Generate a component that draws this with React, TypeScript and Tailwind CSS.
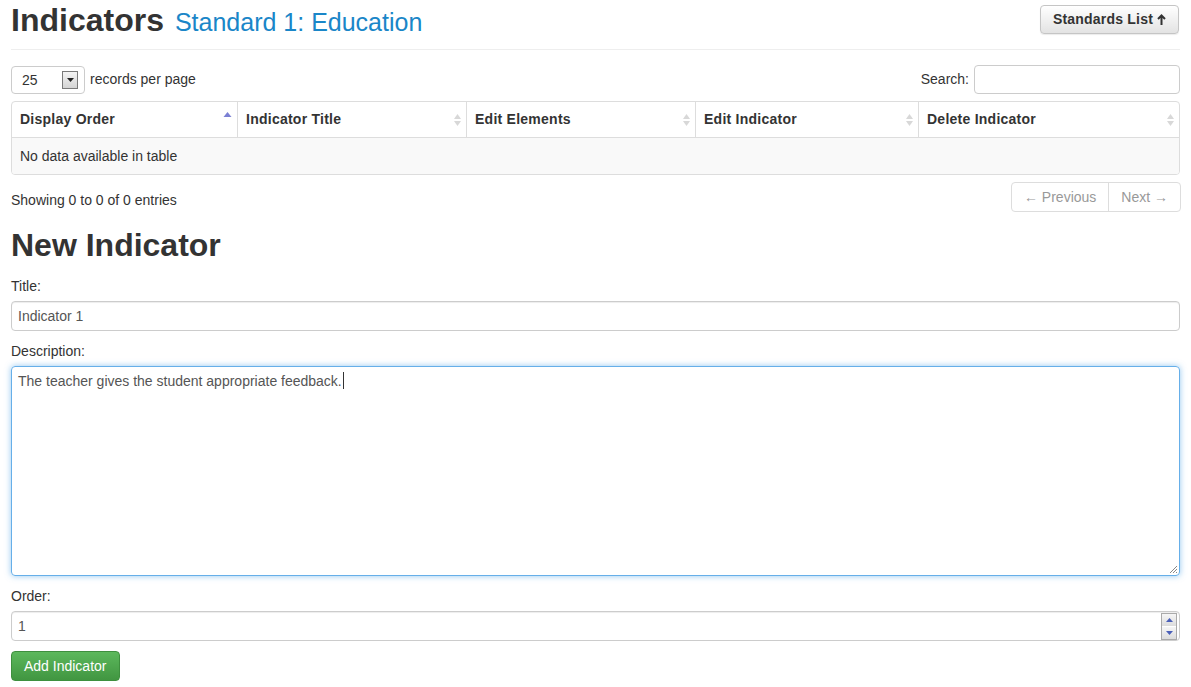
const columns = [
  { title: "Display Order", width: "w-[225px]", active: true },
  { title: "Indicator Title", width: "w-[229px]" },
  { title: "Edit Elements", width: "w-[229px]" },
  { title: "Edit Indicator", width: "w-[223px]" },
  { title: "Delete Indicator", width: "flex-1" },
];

function SortIcon({ active }: { active?: boolean }) {
  if (active) {
    return (
      <svg width="9" height="12" viewBox="0 0 9 12" aria-hidden="true">
        <path d="M4.5 1 L8.5 6 H0.5 Z" fill="#7b80d4" />
      </svg>
    );
  }
  return (
    <svg width="9" height="14" viewBox="0 0 9 14" aria-hidden="true">
      <path d="M4.5 1 L8 6 H1 Z" fill="#d8d8d8" />
      <path d="M4.5 13 L8 8 H1 Z" fill="#d8d8d8" />
    </svg>
  );
}

export default function App() {
  return (
    <div className="min-h-[687px] bg-white px-[11px] pt-[2px] font-['Liberation_Sans',Arial,sans-serif] text-[14px] text-[#333]">
      {/* En-tête */}
      <div className="flex items-start justify-between">
        <h1 className="flex items-baseline gap-[11px] leading-[36px]">
          <span className="text-[32px] font-bold">Indicators</span>
          <span className="text-[25px] text-[#1a86c8]">Standard 1: Education</span>
        </h1>
        <button className="mr-[1px] mt-[3px] flex h-[29px] items-center gap-[4px] rounded-[4px] border border-[#c5c5c5] bg-linear-to-b from-white to-[#e3e3e3] px-[12px] text-[14px] font-bold tracking-[0.2px] text-[#333] shadow-[0_1px_1px_rgba(0,0,0,0.08)]">
          Standards List
          <svg width="9" height="11" viewBox="0 0 9 11" aria-hidden="true">
            <path d="M4.5 1.5 V11 M1 5 L4.5 1.5 L8 5" stroke="#333" strokeWidth="2" fill="none" />
          </svg>
        </button>
      </div>
      <div className="mt-[9px] border-t border-[#eee]" />

      {/* Barre de contrôle */}
      <div className="mt-[15px] flex items-center justify-between">
        <div className="flex items-center gap-[5px]">
          <div className="flex h-[28px] w-[74px] items-center justify-between rounded-[4px] border border-[#ccc] pl-[10px] pr-[6px]">
            <span>25</span>
            <span className="flex h-[18px] w-[16px] items-center justify-center border border-[#7a7a7a] bg-linear-to-b from-[#f4f4f4] to-[#d4d4d4]">
              <svg width="7" height="4" viewBox="0 0 7 4" aria-hidden="true">
                <path d="M0 0 H7 L3.5 4 Z" fill="#222" />
              </svg>
            </span>
          </div>
          <span className="pb-[2px]">records per page</span>
        </div>
        <div className="flex items-center gap-[5px] pb-[1px]">
          <span>Search:</span>
          <input className="h-[29px] w-[206px] rounded-[4px] border border-[#ccc] outline-none" />
        </div>
      </div>

      {/* Tableau */}
      <div className="mt-[6px] overflow-hidden rounded-[4px] border border-[#ddd]">
        <div className="flex h-[36px] border-b border-[#ddd]">
          {columns.map((col, i) => (
            <div
              key={col.title}
              className={`flex items-center justify-between ${col.width} pl-[8px] pr-[4px] font-bold tracking-[0.25px] ${i > 0 ? "border-l border-[#ddd]" : ""}`}
            >
              <span>{col.title}</span>
              <span className={col.active ? "-mt-[5px] pr-[1px]" : ""}>
                <SortIcon active={col.active} />
              </span>
            </div>
          ))}
        </div>
        <div className="flex h-[36px] items-center bg-[#f9f9f9] pl-[8px]">No data available in table</div>
      </div>

      {/* Pagination */}
      <div className="mt-[7px] flex items-start justify-between">
        <span className="mt-[8px]">Showing 0 to 0 of 0 entries</span>
        <div className="mr-[-1px] flex h-[30px] overflow-hidden rounded-[4px] border border-[#ddd] text-[#999]">
          <span className="flex items-center px-[12px]">← Previous</span>
          <span className="flex items-center border-l border-[#ddd] px-[12px]">Next →</span>
        </div>
      </div>

      {/* Formulaire */}
      <h2 className="mt-[14px] text-[32px] font-bold leading-[38px]">New Indicator</h2>

      <label className="mt-[12px] block">Title:</label>
      <input
        readOnly
        value="Indicator 1"
        className="mt-[4px] block h-[30px] w-full rounded-[4px] border border-[#ccc] px-[6px] text-[#555] shadow-[inset_0_1px_1px_rgba(0,0,0,0.075)] outline-none"
      />

      <label className="mt-[10px] block">Description:</label>
      <div className="relative mt-[4px] h-[210px] w-full rounded-[4px] border border-[#66afe9] px-[6px] pt-[2px] text-[#555] shadow-[0_0_6px_rgba(102,175,233,0.7)]">
        <span>The teacher gives the student appropriate feedback.</span>
        <span className="ml-[1px] inline-block h-[17px] w-[1px] translate-y-[3px] bg-[#333]" />
        <svg className="absolute bottom-[1px] right-[1px]" width="10" height="10" viewBox="0 0 10 10" aria-hidden="true">
          <path d="M9 2 L2 9 M9 5 L5 9 M9 8 L8 9" stroke="#888" strokeWidth="1" />
        </svg>
      </div>

      <label className="mt-[10px] block">Order:</label>
      <div className="relative mt-[4px] flex h-[30px] w-full items-center rounded-[4px] border border-[#ccc] px-[6px] text-[#555] shadow-[inset_0_1px_1px_rgba(0,0,0,0.075)]">
        <span>1</span>
        <div className="absolute right-[2px] top-[1px] flex flex-col gap-[1px] border border-[#aaa]">
          <span className="flex h-[12px] w-[14px] items-center justify-center bg-linear-to-b from-[#f6f6f6] to-[#dcdcdc]">
            <svg width="7" height="4" viewBox="0 0 7 4" aria-hidden="true">
              <path d="M3.5 0 L7 4 H0 Z" fill="#4a5fb8" />
            </svg>
          </span>
          <span className="flex h-[12px] w-[14px] items-center justify-center bg-linear-to-b from-[#f6f6f6] to-[#dcdcdc]">
            <svg width="7" height="4" viewBox="0 0 7 4" aria-hidden="true">
              <path d="M0 0 H7 L3.5 4 Z" fill="#4a5fb8" />
            </svg>
          </span>
        </div>
      </div>

      <button className="mt-[10px] h-[30px] rounded-[4px] border border-[#3e8f3e] bg-linear-to-b from-[#5cb85c] to-[#419641] px-[12px] text-[14px] text-white">
        Add Indicator
      </button>
    </div>
  );
}
